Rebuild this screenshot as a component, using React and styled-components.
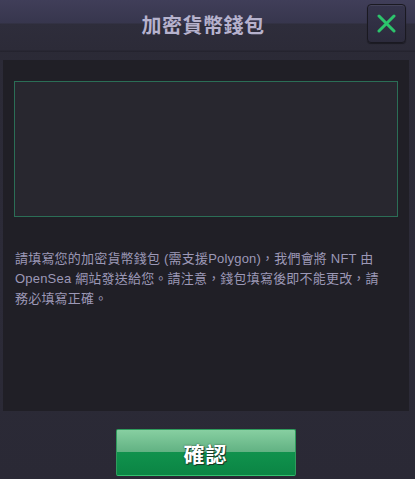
import React from 'react';
import styled, { createGlobalStyle } from 'styled-components';

const GlobalStyle = createGlobalStyle`
  html, body {
    margin: 0;
    padding: 0;
    background: #2a2935;
  }
  * {
    box-sizing: border-box;
  }
`;

const Page = styled.div`
  display: flex;
  flex-direction: column;
  height: 479px;
  overflow: hidden;
  background: linear-gradient(#2b2a36, #2c2b38 60%, #2a2935);
  font-family: "Liberation Sans", "Noto Sans CJK TC", sans-serif;
`;

const Header = styled.header`
  display: grid;
  grid-template-columns: 1fr auto 1fr;
  align-items: center;
  height: 52px;
  padding: 4px 9px 8px 0;
  background: linear-gradient(#403e59 0px, #37364d 23px, #2e2d3b 24px, #2c2b38 50px, #24232e 51px, #25242f 52px);
`;

const Title = styled.h1`
  grid-column: 2;
  margin: 0;
  font-size: 20px;
  font-weight: 700;
  color: #b6b2cd;
  letter-spacing: 0.5px;
  font-family: "Noto Sans CJK TC", sans-serif;
`;

const CloseButton = styled.button`
  grid-column: 3;
  justify-self: end;
  display: flex;
  align-items: center;
  justify-content: center;
  width: 39px;
  height: 39px;
  padding: 0;
  border: 1px solid #1a1921;
  border-radius: 4px;
  background: linear-gradient(#35344b, #2c2b3c);
  box-shadow: inset 0 1px 0 rgba(255, 255, 255, 0.08), 0 1px 1px rgba(0, 0, 0, 0.4);
  align-self: start;
`;

const Panel = styled.section`
  display: flex;
  flex-direction: column;
  height: 351px;
  margin: 8px 6px 0 3px;
  padding: 21px 11px 0;
  background: #201f26;
`;

const WalletInput = styled.textarea`
  height: 136px;
  width: 100%;
  border: 1px solid #2b6e56;
  background: #28272f;
  resize: none;
  outline: none;
  color: #c8c4de;
  font: inherit;
  font-size: 14px;
  padding: 8px;
`;

const Notice = styled.p`
  margin: 32px 0 0 1px;
  font-size: 13px;
  line-height: 20px;
  color: #9c98b6;
  letter-spacing: 0.2px;
`;

const Footer = styled.footer`
  display: flex;
  justify-content: center;
  padding: 18px 4px 0 0;
`;

const ConfirmButton = styled.button`
  width: 180px;
  height: 47px;
  padding: 0;
  border: 1px solid #2f9c5d;
  border-bottom-color: #33c16e;
  border-radius: 2px;
  background: linear-gradient(#87cfa1 0%, #62b283 48%, #10924d 49%, #0b8544 100%);
  color: #ffffff;
  font-family: "Noto Sans CJK TC", sans-serif;
  font-size: 21px;
  font-weight: 700;
  letter-spacing: 1px;
  text-shadow: 1px 1px 0 #1b3a28, 0 0 2px rgba(0, 0, 0, 0.6);
`;

const XIcon = () => (
  <svg width="19" height="19" viewBox="0 0 19 19">
    <path d="M2 2 L17 17 M17 2 L2 17" stroke="#2cc46c" strokeWidth="3" strokeLinecap="round" />
  </svg>
);

export default function App() {
  return (
    <>
      <GlobalStyle />
      <Page>
        <Header>
          <Title>加密貨幣錢包</Title>
          <CloseButton aria-label="關閉">
            <XIcon />
          </CloseButton>
        </Header>
        <Panel>
          <WalletInput />
          <Notice>
            請填寫您的加密貨幣錢包 (需支援Polygon)，我們會將 NFT 由 OpenSea 網站發送給您。請注意，錢包填寫後即不能更改，請
            <br />
            務必填寫正確。
          </Notice>
        </Panel>
        <Footer>
          <ConfirmButton>確認</ConfirmButton>
        </Footer>
      </Page>
    </>
  );
}
